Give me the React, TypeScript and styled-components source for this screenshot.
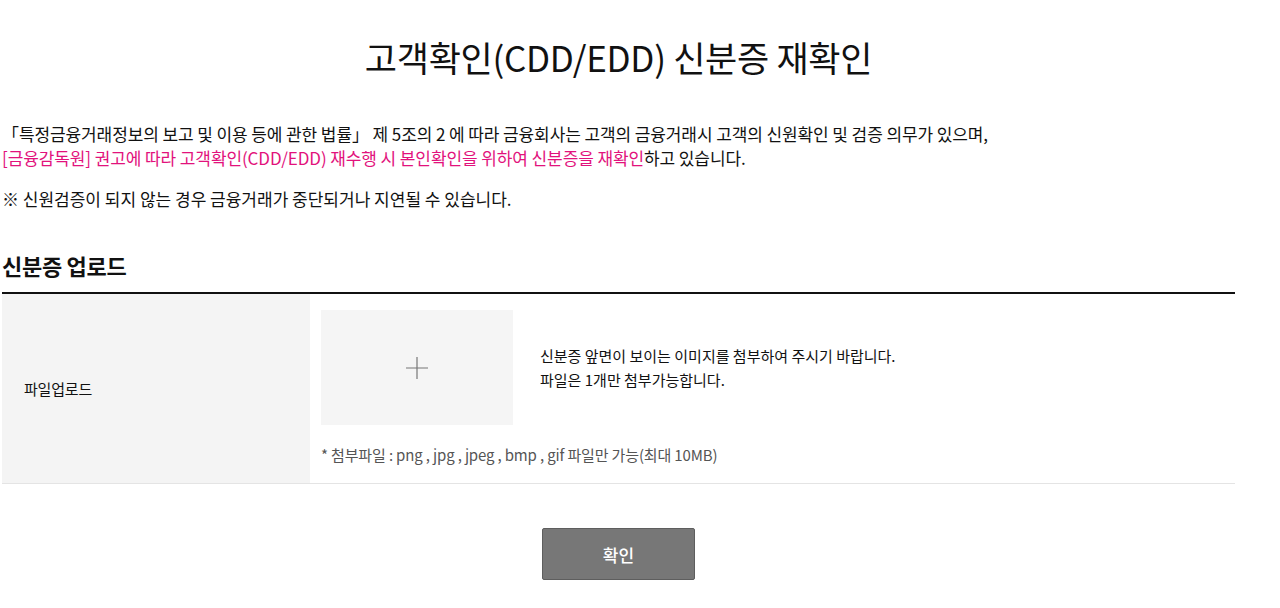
import styled, { createGlobalStyle } from "styled-components";

const GlobalStyle = createGlobalStyle`
  body {
    margin: 0;
    background: #fff;
    font-family: "Noto Sans CJK KR", "Noto Sans", sans-serif;
    color: #111;
  }
`;

const App = () => {
  return (
    <>
      <GlobalStyle />
      <Page>
        <Title>고객확인(CDD/EDD) 신분증 재확인</Title>
        <Intro>
          「특정금융거래정보의 보고 및 이용 등에 관한 법률」 제 5조의 2 에 따라
          금융회사는 고객의 금융거래시 고객의 신원확인 및 검증 의무가 있으며,
          <br />
          <Pink>
            [금융감독원] 권고에 따라 고객확인(CDD/EDD) 재수행 시 본인확인을
            위하여 신분증을 재확인
          </Pink>
          하고 있습니다.
        </Intro>
        <Notice>※ 신원검증이 되지 않는 경우 금융거래가 중단되거나 지연될 수 있습니다.</Notice>

        <SectionTitle>신분증 업로드</SectionTitle>
        <Table>
          <LabelCell>파일업로드</LabelCell>
          <ValueCell>
            <UploadRow>
              <UploadBox type="button" aria-label="파일 추가">
                <svg width="24" height="24" viewBox="0 0 24 24">
                  <path d="M12 1v22M1 12h22" stroke="#777" strokeWidth="1.2" fill="none" />
                </svg>
              </UploadBox>
              <Guide>
                신분증 앞면이 보이는 이미지를 첨부하여 주시기 바랍니다.
                <br />
                파일은 1개만 첨부가능합니다.
              </Guide>
            </UploadRow>
            <FileNote>* 첨부파일 : png , jpg , jpeg , bmp , gif 파일만 가능(최대 10MB)</FileNote>
          </ValueCell>
        </Table>

        <Actions>
          <ConfirmBtn type="button">확인</ConfirmBtn>
        </Actions>
      </Page>
    </>
  );
};

export default App;

// style
const Page = styled.div`
  width: 1233px;
  margin-left: 2px;
  padding-top: 33px;
`;
const Title = styled.h1`
  margin: 0;
  text-align: center;
  font-size: 35px;
  font-weight: 400;
  line-height: 48px;
  letter-spacing: -0.3px;
`;
const Intro = styled.p`
  margin: 41px 0 0;
  font-size: 17px;
  line-height: 24px;
  letter-spacing: -0.1px;
`;
const Pink = styled.span`
  color: #e2127c;
`;
const Notice = styled.p`
  margin: 17px 0 0;
  font-size: 17px;
  line-height: 24px;
  letter-spacing: 0;
`;
const SectionTitle = styled.h2`
  margin: 40px 0 0;
  font-size: 22px;
  font-weight: 700;
  line-height: 28px;
  padding-bottom: 13px;
  border-bottom: 2px solid #111;
  letter-spacing: -0.3px;
`;
const Table = styled.div`
  display: grid;
  grid-template-columns: 308px 1fr;
  border-bottom: 1px solid #e4e4e4;
`;
const LabelCell = styled.div`
  display: flex;
  align-items: center;
  padding-left: 22px;
  background: #f4f4f4;
  font-size: 15px;
  letter-spacing: -0.2px;
`;
const ValueCell = styled.div`
  padding: 16px 11px 16px;
`;
const UploadRow = styled.div`
  display: flex;
  align-items: center;
  gap: 27px;
`;
const UploadBox = styled.button`
  width: 192px;
  height: 115px;
  border: 0;
  background: #f5f5f5;
  display: flex;
  align-items: center;
  justify-content: center;
  cursor: pointer;
  padding: 0;
`;
const Guide = styled.p`
  margin: 0;
  font-size: 15px;
  line-height: 24px;
  letter-spacing: 0;
  color: #111;
`;
const FileNote = styled.p`
  margin: 18px 0 0;
  font-size: 15px;
  line-height: 24px;
  color: #555;
  letter-spacing: -0.15px;
`;
const Actions = styled.div`
  display: flex;
  justify-content: center;
  padding-top: 44px;
`;
const ConfirmBtn = styled.button`
  width: 153px;
  height: 52px;
  background: #777;
  border: 1px solid #5e5e5e;
  border-radius: 2px;
  color: #fff;
  font-family: "Noto Sans CJK KR", sans-serif;
  font-size: 17px;
  font-weight: 500;
  cursor: pointer;
`;
